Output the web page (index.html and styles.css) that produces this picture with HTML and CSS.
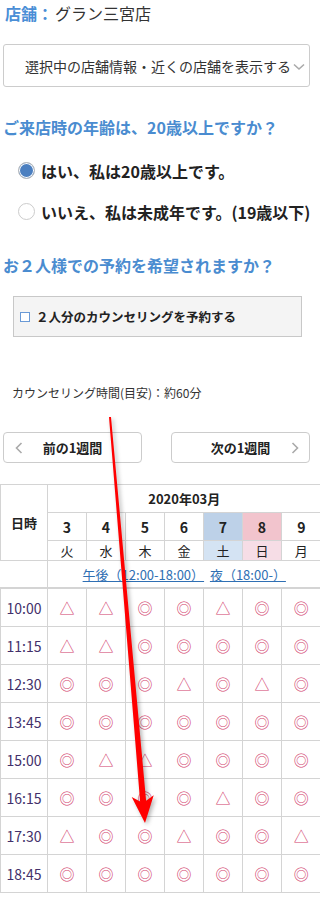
FILE: index.html
```html
<!DOCTYPE html>
<html lang="ja">
<head>
  <meta charset="UTF-8" />
  <meta name="viewport" content="width=device-width, initial-scale=1.0" />
  <title>カウンセリング予約</title>
  <link rel="stylesheet" href="styles.css">
</head>
<body>
  <div class="store"><span class="store-label">店舗：</span>グラン三宮店</div>

  <div class="shop-select">
    <span>選択中の店舗情報・近くの店舗を表示する</span>
    <svg class="chev-down" width="12" height="8" viewBox="0 0 12 8"><polyline points="1,1.5 6,6 11,1.5" fill="none" stroke="#aaa" stroke-width="1.6"/></svg>
  </div>

  <h3 class="question q-age">ご来店時の年齢は、20歳以上ですか？</h3>
  <label class="radio-row first"><span class="radio checked"></span>はい、私は20歳以上です。</label>
  <label class="radio-row"><span class="radio"></span>いいえ、私は未成年です。(19歳以下)</label>

  <h3 class="question q-pair">お２人様での予約を希望されますか？</h3>
  <label class="pair-box"><span class="check"></span>２人分のカウンセリングを予約する</label>

  <div class="duration">カウンセリング時間(目安)：約60分</div>

  <div class="week-nav">
    <button class="week-btn prev">
      <svg class="chev" width="8" height="12" viewBox="0 0 8 12"><polyline points="6.5,1 1.5,6 6.5,11" fill="none" stroke="#aaa" stroke-width="1.6"/></svg>
      前の1週間
    </button>
    <button class="week-btn next">
      次の1週間
      <svg class="chev" width="8" height="12" viewBox="0 0 8 12"><polyline points="1.5,1 6.5,6 1.5,11" fill="none" stroke="#aaa" stroke-width="1.6"/></svg>
    </button>
  </div>

  <table class="calendar">
    <colgroup>
      <col class="c-time"><col><col><col><col><col><col><col>
    </colgroup>
    <thead>
      <tr class="r-month">
        <th rowspan="3" class="head-time">日時</th>
        <th colspan="7">2020年03月</th>
      </tr>
      <tr class="r-date">
        <th>3</th><th>4</th><th>5</th><th>6</th><th class="sat">7</th><th class="sun">8</th><th>9</th>
      </tr>
      <tr class="r-day">
        <td>火</td><td>水</td><td>木</td><td>金</td><td class="sat-light">土</td><td class="sun-light">日</td><td>月</td>
      </tr>
      <tr class="r-band">
        <td></td>
        <td colspan="7"><a href="#">午後（12:00-18:00）</a>&nbsp; <a href="#">夜（18:00-）</a></td>
      </tr>
    </thead>
    <tbody id="slots"></tbody>
  </table>

  <svg class="arrow" width="320" height="897" viewBox="0 0 320 897">
    <polygon points="111,416.9 146.1,800.8 153.7,795.2 145,823 131.7,797 140.1,801.4 109,417.1" fill="#ff0000"/>
  </svg>

  <script>
    const slots = [
      ['10:00', '△△◎◎△◎◎'],
      ['11:15', '△△◎◎◎◎◎'],
      ['12:30', '◎◎◎△◎△◎'],
      ['13:45', '◎◎◎◎◎◎◎'],
      ['15:00', '◎△△◎◎◎◎'],
      ['16:15', '◎◎◎◎△◎◎'],
      ['17:30', '△◎◎△◎◎△'],
      ['18:45', '◎◎◎◎◎◎◎']
    ];
    const body = document.getElementById('slots');
    body.innerHTML = slots.map(([time, marks]) =>
      `<tr><td class="time">${time}</td>${[...marks].map(m => `<td class="mark">${m}</td>`).join('')}</tr>`
    ).join('');
  </script>
</body>
</html>
```

FILE: styles.css
```css
body { margin: 0; position: relative; font-family: "Noto Sans CJK JP", "Noto Sans", sans-serif; color: #333; width: 320px; }

.store { height: 26px; line-height: 26px; font-size: 16px; padding-left: 5px; white-space: nowrap; }
.store-label { color: #4a8ed6; font-weight: bold; margin-right: 2px; }

.shop-select { margin: 18px 0 0 3px; width: 307px; height: 43px; box-sizing: border-box; border: 1px solid #ccc; border-radius: 3px; display: flex; align-items: center; padding-left: 21px; font-size: 14px; white-space: nowrap; }
.chev-down { margin-left: 2px; margin-top: 2px; }

.question { margin: 0; padding-left: 3px; height: 24px; line-height: 24px; font-size: 16px; font-weight: bold; color: #4a8cd0; white-space: nowrap; }
.q-age { margin-top: 28px; }
.q-pair { margin-top: 21px; }

.radio-row { height: 41px; display: flex; align-items: center; gap: 6px; padding-left: 18px; font-size: 16px; font-weight: bold; color: #222; white-space: nowrap; }
.radio-row.first { margin-top: 11px; }
.radio { width: 15px; height: 15px; border: 1px solid #ccc; border-radius: 50%; background: #fff; flex: none; }
.radio.checked { background: #4b7fc0; box-shadow: inset 0 0 0 1px #fff; border-color: #bbb; }

.pair-box { margin: 19px 0 0 13px; width: 289px; height: 41px; box-sizing: border-box; background: #f4f4f4; border: 1px solid #c8c8c8; display: flex; align-items: center; gap: 6px; padding-left: 6px; font-size: 12.5px; font-weight: bold; color: #222; white-space: nowrap; }
.check { width: 8px; height: 8px; border: 1px solid #6a9ad6; background: #fff; flex: none; }

.duration { margin-top: 46px; padding-left: 12px; height: 20px; line-height: 20px; font-size: 12px; white-space: nowrap; }

.week-nav { margin-top: 29px; padding: 0 10px 0 3px; display: flex; justify-content: space-between; }
.week-btn { width: 139px; height: 31px; box-sizing: border-box; border: 1px solid #ccc; border-radius: 4px; background: #fff; font-family: inherit; font-size: 13px; font-weight: bold; color: #222; display: flex; align-items: center; justify-content: center; position: relative; padding: 0; }
.week-btn .chev { position: absolute; top: 9px; }
.prev .chev { left: 11px; }
.next .chev { right: 10px; }

.calendar { margin-top: 21px; width: 320px; table-layout: fixed; border-collapse: collapse; }
.calendar col { width: 39px; }
.calendar col.c-time { width: 47px; }
.calendar th, .calendar td { border: 1px solid #d4d4d4; padding: 0; text-align: center; }
.calendar tr > :last-child { border-right: none; }
.head-time, .r-band td:first-child, .time { border-left: none; }
.calendar th { font-size: 13px; font-weight: bold; color: #222; }
.r-month th { height: 27px; }
.r-date th { height: 27px; font-size: 14px; }
.r-day td { height: 19px; font-size: 13px; color: #222; line-height: 19px; }
.r-band td { height: 26px; border-bottom: 2px solid #d4d4d4; font-size: 13px; }
.r-band a { color: #2f6fb3; text-decoration: underline; }
.sat { background: #bdd1e8; }
.sun { background: #f2c4cd; }
.sat-light { background: #d4e3f3; }
.sun-light { background: #f6dde6; }

.calendar tbody td { height: 37px; }
.time { font-size: 14px; color: #43306a; }
.mark { font-size: 15px; color: #d2406d; }

.arrow { position: absolute; left: 0; top: 0; pointer-events: none; filter: drop-shadow(2px 2px 2px rgba(0, 0, 0, 0.3)); }
```
